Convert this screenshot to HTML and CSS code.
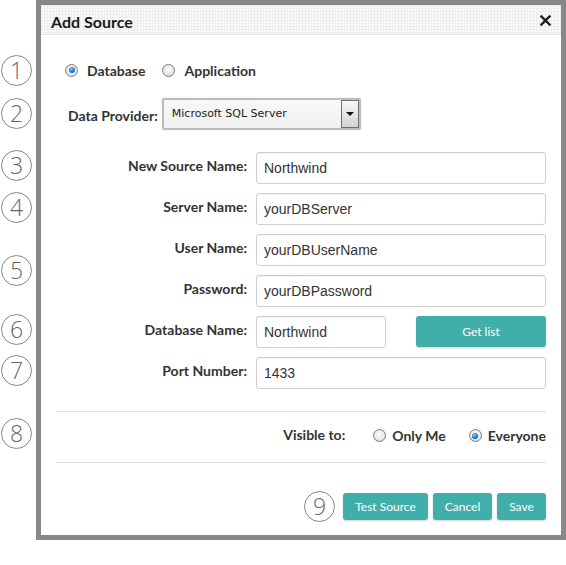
FILE: index.html
```html
<!DOCTYPE html>
<html>
<head>
<meta charset="utf-8">
<link rel="stylesheet" href="styles.css">
</head>
<body>
<div class="page">
  <span class="callout c1">1</span>
  <span class="callout c2">2</span>
  <span class="callout c3">3</span>
  <span class="callout c4">4</span>
  <span class="callout c5">5</span>
  <span class="callout c6">6</span>
  <span class="callout c7">7</span>
  <span class="callout c8">8</span>

  <div class="dialog">
    <div class="dlg-head">
      <span class="title">Add Source</span>
      <span class="close"><svg width="11" height="11" viewBox="0 0 11 11"><path d="M1.5 1.5 L9.5 9.5 M9.5 1.5 L1.5 9.5" stroke="#1e1e1e" stroke-width="2.4" stroke-linecap="square"/></svg></span>
    </div>
    <div class="dlg-body">
      <div class="type-row">
        <label class="radio-item"><span class="radio checked"></span>Database</label>
        <label class="radio-item"><span class="radio"></span>Application</label>
      </div>
      <div class="provider-row">
        <span class="provider-label">Data Provider:</span>
        <div class="select">
          <span class="select-text">Microsoft SQL Server</span>
          <span class="select-btn"><span class="tri"></span></span>
        </div>
      </div>
      <div class="form">
        <span class="lbl">New Source Name:</span>
        <div class="field"><span class="input">Northwind</span></div>
        <span class="lbl">Server Name:</span>
        <div class="field"><span class="input">yourDBServer</span></div>
        <span class="lbl">User Name:</span>
        <div class="field"><span class="input">yourDBUserName</span></div>
        <span class="lbl">Password:</span>
        <div class="field"><span class="input">yourDBPassword</span></div>
        <span class="lbl">Database Name:</span>
        <div class="field split"><span class="input short">Northwind</span><button class="btn getlist">Get list</button></div>
        <span class="lbl">Port Number:</span>
        <div class="field"><span class="input">1433</span></div>
      </div>
      <div class="sep"></div>
      <div class="visible-row">
        <span class="vis-label">Visible to:</span>
        <label class="radio-item"><span class="radio"></span>Only Me</label>
        <label class="radio-item"><span class="radio checked"></span>Everyone</label>
      </div>
      <div class="sep sep2"></div>
      <div class="actions">
        <span class="callout inline">9</span>
        <button class="btn test">Test Source</button>
        <button class="btn cancel">Cancel</button>
        <button class="btn save">Save</button>
      </div>
    </div>
  </div>
</div>
</body>
</html>
```

FILE: styles.css
```css
html, body {
  margin: 0;
  padding: 0;
  background: #fff;
}
body {
  font-family: Lato, "Open Sans", sans-serif;
  color: #333;
}
.page {
  position: relative;
  width: 566px;
  height: 565px;
}
.callout {
  position: absolute;
  left: 1px;
  width: 31px;
  height: 31px;
  box-sizing: border-box;
  border: 1.5px solid #858585;
  border-radius: 50%;
  display: flex;
  align-items: center;
  justify-content: center;
  font-family: "Open Sans", sans-serif;
  font-weight: 300;
  font-size: 23px;
  color: #666;
  line-height: 1;
  background: #fff;
}
.c1 { top: 55px; }
.c2 { top: 98px; }
.c3 { top: 150px; }
.c4 { top: 192px; }
.c5 { top: 255px; }
.c6 { top: 314px; }
.c7 { top: 355px; }
.c8 { top: 418px; }
.callout.inline {
  position: static;
}
.dialog {
  margin-left: 36px;
  width: 530px;
  box-sizing: border-box;
  border: 5px solid #888;
  background: #fff;
}
.dlg-head {
  height: 29px;
  border-bottom: 1px solid #e2e2e2;
  background-color: #fbfbfb;
  background-image:
    linear-gradient(#ededed 1px, transparent 1px),
    linear-gradient(90deg, #ededed 1px, transparent 1px);
  background-size: 3px 3px;
  display: flex;
  align-items: center;
  justify-content: space-between;
  padding: 0 10px 0 10px;
}
.title {
  font-weight: 700;
  font-size: 16px;
  color: #1a1a1a;
  margin-top: 3px;
}
.close {
  display: flex;
  margin-top: 1px;
}
.dlg-body {
  padding: 0 15px 13px 15px;
}
.type-row {
  margin-top: 26px;
  height: 18px;
  display: flex;
  align-items: center;
  padding-left: 9px;
  gap: 17px;
}
.radio-item {
  display: flex;
  align-items: center;
  gap: 9px;
  font-weight: 700;
  font-size: 14px;
  color: #333;
}
.radio {
  width: 13px;
  height: 13px;
  box-sizing: border-box;
  border-radius: 50%;
  border: 1px solid #7d7d7d;
  background: radial-gradient(circle at 50% 40%, #fdfdfd 0%, #e6e6e6 60%, #cfcfcf 100%);
  position: relative;
  flex: none;
}
.radio.checked::after {
  content: "";
  position: absolute;
  left: 2.5px;
  top: 2.5px;
  width: 6px;
  height: 6px;
  border-radius: 50%;
  background: radial-gradient(circle at 40% 35%, #8fd0ff 0%, #1a7ad0 50%, #0a3f7a 100%);
}
.provider-row {
  margin-top: 19px;
  padding-left: 12px;
  display: flex;
  align-items: center;
  gap: 4px;
}
.provider-label {
  font-weight: 700;
  font-size: 14px;
  margin-top: 3px;
}
.select {
  width: 199px;
  height: 32px;
  box-sizing: border-box;
  border: 2px solid #bdbdbd;
  border-radius: 2px;
  background: linear-gradient(#f8f8f8, #f1f1f1);
  display: flex;
  align-items: center;
  justify-content: space-between;
  padding: 0 0 0 8px;
  box-shadow: 0 0 1px #999;
}
.select-text {
  font-family: "DejaVu Sans", sans-serif;
  font-size: 11px;
  color: #222;
  margin-top: -2px;
}
.select-btn {
  width: 18px;
  height: 28px;
  box-sizing: border-box;
  border: 1px solid #6f6f6f;
  background: linear-gradient(#f8f8f8, #d2d2d2);
  display: flex;
  align-items: center;
  justify-content: center;
}
.tri {
  width: 0;
  height: 0;
  border-left: 4px solid transparent;
  border-right: 4px solid transparent;
  border-top: 4px solid #111;
}
.form {
  margin-top: 22px;
  display: grid;
  grid-template-columns: 191px 290px;
  column-gap: 9px;
  row-gap: 9px;
}
.lbl {
  text-align: right;
  font-weight: 700;
  font-size: 14px;
  color: #333;
  align-self: start;
  margin-top: 5px;
}
.field {
  display: flex;
  height: 32px;
}
.field.split {
  justify-content: space-between;
}
.input {
  flex: 1;
  box-sizing: border-box;
  height: 32px;
  border: 1px solid #cfcfcf;
  border-radius: 3px;
  box-shadow: inset 0 1px 1px rgba(0,0,0,0.05);
  padding: 0 7px;
  display: flex;
  align-items: center;
  font-family: "Liberation Sans", Arial, sans-serif;
  font-size: 14px;
  color: #333;
}
.input.short {
  flex: none;
  width: 130px;
}
.btn {
  border: none;
  background: #40aea9;
  color: #fff;
  font-family: Lato, sans-serif;
  font-size: 12px;
  border-radius: 3px;
  box-shadow: 0 1px 2px rgba(0,0,0,0.18);
  padding: 0;
  cursor: pointer;
}
.getlist {
  width: 130px;
  height: 31px;
}
.sep {
  margin-top: 22px;
  height: 1px;
  background: #dedede;
}
.sep2 {
  margin-top: 17px;
}
.visible-row {
  margin-top: 13px;
  height: 20px;
  display: flex;
  align-items: center;
  justify-content: flex-end;
}
.vis-label {
  font-weight: 700;
  font-size: 14px;
  margin-right: 28px;
  margin-top: -2px;
}
.visible-row .radio-item {
  gap: 6px;
  margin-top: 1px;
}
.visible-row .radio-item + .radio-item {
  margin-left: 23px;
}
.actions {
  margin-top: 28px;
  display: flex;
  align-items: center;
  justify-content: flex-end;
  gap: 5px;
}
.actions .callout.inline {
  margin-right: 3px;
}
.actions .btn {
  height: 27px;
}
.test { width: 85px; }
.cancel { width: 59px; }
.save { width: 49px; }
```
